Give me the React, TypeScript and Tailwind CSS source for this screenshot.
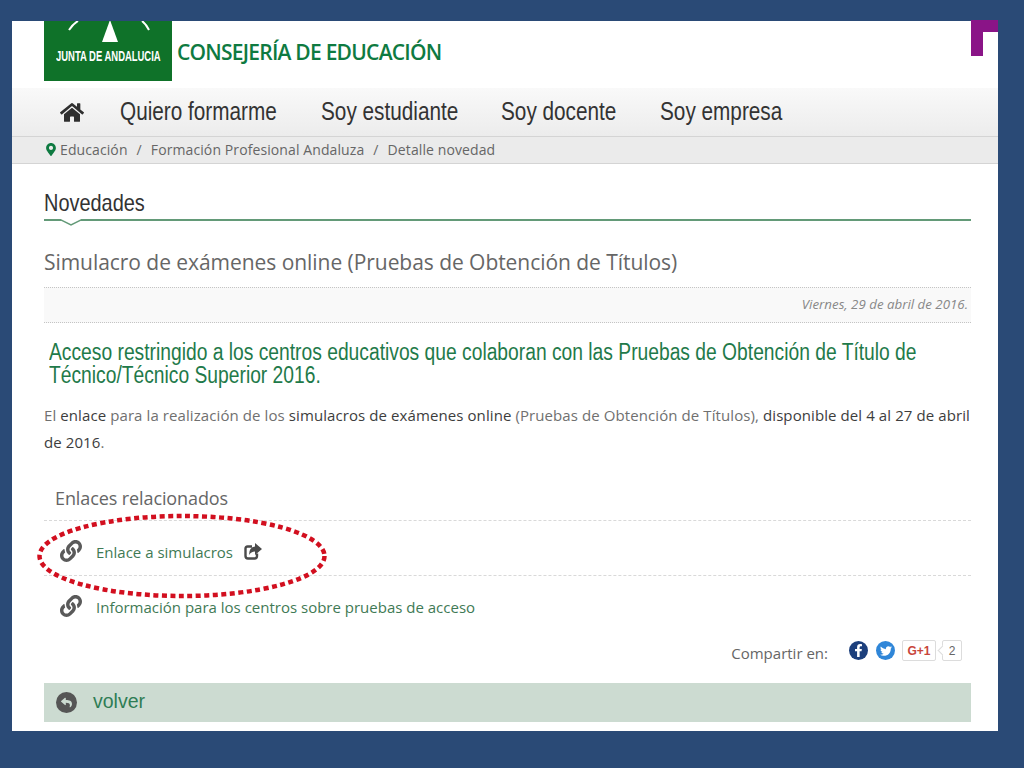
import React from "react";
import { FaHome, FaMapMarkerAlt, FaLink, FaReply, FaFacebookF, FaTwitter } from "react-icons/fa";

const open = "font-['Open_Sans',sans-serif]";
const arial = "font-['Liberation_Sans',Arial,sans-serif]";

function Narrow({ children, width, scale, className = "" }: { children: React.ReactNode; width: number; scale: number; className?: string }) {
  return (
    <span className={`block shrink-0 ${className}`} style={{ width }}>
      <span className="inline-block origin-left whitespace-nowrap" style={{ transform: `scaleX(${scale})` }}>
        {children}
      </span>
    </span>
  );
}

function ShareIcon() {
  return (
    <svg className="mb-[1px] ml-[11px]" width="18" height="17" viewBox="0 0 18 17">
      <path d="M8 3.5 H3.5 Q1.5 3.5 1.5 5.5 V13 Q1.5 15.5 4 15.5 H10.5 Q13 15.5 13 13 V10.5" fill="none" stroke="#4a4a4a" strokeWidth="2.4" />
      <path d="M11 0 L18 6 L11 12 V8.5 Q7 8.5 5 12 Q5 4 11 3.5 Z" fill="#4a4a4a" />
    </svg>
  );
}

function LinkRow({ text, ext, border }: { text: string; ext?: boolean; border?: boolean }) {
  return (
    <div className={`flex h-[55px] items-center pl-[16px] pt-[8px] ${border ? "border-t border-dashed border-[#d9d9d9]" : ""}`}>
      <FaLink className="mb-[2px] h-[22px] w-[22px] text-[#5a5a5a]" />
      <span className="ml-[14px] text-[15px] text-[#3f7a55]">{text}</span>
      {ext && <ShareIcon />}
    </div>
  );
}

export default function App() {
  return (
    <div className={`h-[768px] w-[1024px] overflow-hidden bg-[#2a4a76] pl-[12px] pt-[21px] ${open}`}>
      <div className="relative h-[710px] w-[986px] bg-white">
        {/* purple corner */}
        <div className="absolute left-[959px] top-[-1px] h-[12px] w-[27px] bg-[#8a1487]" />
        <div className="absolute left-[959px] top-[-1px] h-[36px] w-[12px] bg-[#8a1487]" />

        {/* header */}
        <header className="flex h-[67px] items-start pl-[32px]">
          <div className="relative flex h-[60px] w-[128px] items-end justify-center overflow-hidden bg-[#0f7229] pb-[18px]">
            <svg className="absolute left-0 top-0" width="128" height="30" viewBox="0 0 128 30">
              <polygon points="66,-1 74,21 58,21" fill="#fff" />
              <path d="M25 9 Q29 3 34 0" stroke="#fff" strokeWidth="2" fill="none" />
              <path d="M98 0 Q102 3 105 9" stroke="#fff" strokeWidth="2" fill="none" />
            </svg>
            <Narrow width={104} scale={0.63} className={`${arial} text-[15px] font-bold leading-none text-white`}>JUNTA DE ANDALUCIA</Narrow>
          </div>
          <div className="ml-[5px] mt-[18px] text-[21px] font-semibold leading-[26px] tracking-[-0.76px] text-[#0e7a41]">CONSEJERÍA DE EDUCACIÓN</div>
        </header>

        {/* nav */}
        <nav className={`flex h-[48px] items-center bg-gradient-to-b from-[#f9f9f9] to-[#ececec] pl-[48px] ${arial} text-[25px] text-[#333]`}>
          <FaHome className="h-[23px] w-[24px] text-[#2f2f2f]" />
          <Narrow width={157} scale={0.83} className="ml-[36px]">Quiero formarme</Narrow>
          <Narrow width={138} scale={0.83} className="ml-[44px]">Soy estudiante</Narrow>
          <Narrow width={116} scale={0.83} className="ml-[42px]">Soy docente</Narrow>
          <Narrow width={123} scale={0.83} className="ml-[43px]">Soy empresa</Narrow>
        </nav>

        {/* breadcrumb */}
        <div className="flex h-[28px] items-center border-y border-[#d4d4d4] bg-[#ebebeb] pb-[2px] pl-[34px] text-[14px] tracking-[0.1px] text-[#666]">
          <FaMapMarkerAlt className="h-[13px] w-[10px] text-[#0e7a41]" />
          <span className="ml-[4px]">Educación</span>
          <span className="mx-[9px]">/</span>
          <span>Formación Profesional Andaluza</span>
          <span className="mx-[9px]">/</span>
          <span>Detalle novedad</span>
        </div>

        <main className="pl-[32px] pr-[27px]">
          {/* Novedades */}
          <div className={`relative mt-[25px] h-[32px] border-b-2 border-[#639a78] ${arial} text-[24px] leading-[27px] text-[#333]`}>
            <Narrow width={101} scale={0.83}>Novedades</Narrow>
            <svg className="absolute left-[15px] top-[30px]" width="24" height="8" viewBox="0 0 24 8">
              <path d="M0 0 L12 6 L24 0" stroke="#639a78" strokeWidth="1.5" fill="#fff" />
            </svg>
          </div>

          <h1 className="mt-[23px] text-[21px] leading-[36px] tracking-[-0.05px] text-[#666]">Simulacro de exámenes online (Pruebas de Obtención de Títulos)</h1>

          <div className="mt-[7px] flex h-[36px] items-center justify-end border-y border-dotted border-[#c4c4c4] bg-[#f9f9f9] pr-[3px] text-[13.3px] italic text-[#888]">
            Viernes, 29 de abril de 2016.
          </div>

          <div className={`ml-[5px] mt-[18px] ${arial} text-[23px] leading-[23px] text-[#1f7a4a]`}>
            <Narrow width={867} scale={0.837}>Acceso restringido a los centros educativos que colaboran con las Pruebas de Obtención de Título de</Narrow>
            <Narrow width={867} scale={0.837}>Técnico/Técnico Superior 2016.</Narrow>
          </div>

          <p className="mt-[15px] text-[15px] leading-[27px] tracking-[0.09px] text-[#707070]">
            El <b className="font-medium text-[#3d3d3d]">enlace</b> para la realización de los <b className="font-medium text-[#3d3d3d]">simulacros de exámenes online</b> (Pruebas de Obtención de Títulos), <b className="font-medium text-[#3d3d3d]">disponible del 4 al 27 de abril de 2016</b>.
          </p>

          <h2 className="mb-[5px] mt-[25px] pl-[11px] text-[18px] leading-[34px] tracking-[-0.1px] text-[#666]">Enlaces relacionados</h2>
          <LinkRow text="Enlace a simulacros" ext border />
          <LinkRow text="Información para los centros sobre pruebas de acceso" border />

          <div className="mt-[10px] flex h-[34px] items-start justify-end pr-[9px]">
            <span className="mt-[2px] text-[15px] text-[#666]">Compartir en:</span>
            <span className="ml-[21px] mt-[1px] flex h-[19px] w-[19px] items-center justify-center rounded-full bg-[#1c3f7c]">
              <FaFacebookF className="h-[13px] w-[13px] text-white" />
            </span>
            <span className="ml-[8px] mt-[1px] flex h-[19px] w-[19px] items-center justify-center rounded-full bg-[#2f86d8]">
              <FaTwitter className="h-[12px] w-[12px] text-white" />
            </span>
            <span className={`ml-[7px] flex h-[21px] w-[34px] items-center justify-center rounded-[2px] border border-[#dcdcdc] ${arial} text-[12px] font-bold text-[#c8453b]`}>G+1</span>
            <span className={`relative ml-[6px] flex h-[21px] w-[20px] items-center justify-center rounded-[2px] border border-[#dcdcdc] ${arial} text-[12px] text-[#666]`}>
              <span className="absolute left-[-4px] top-[6px] h-[7px] w-[7px] rotate-45 border-b border-l border-[#dcdcdc] bg-white" />
              2
            </span>
          </div>

          <div className={`mt-[9px] flex h-[39px] items-center bg-[#ccdbd1] pl-[12px] ${arial} text-[19.5px] text-[#2f7d55]`}>
            <span className="flex h-[21px] w-[21px] items-center justify-center rounded-full bg-[#555]">
              <FaReply className="h-[11px] w-[11px] text-[#ccdbd1]" />
            </span>
            <span className="mb-[1px] ml-[16px]">volver</span>
          </div>
        </main>

        {/* red annotation */}
        <svg className="pointer-events-none absolute left-[22px] top-[489px]" width="296" height="92" viewBox="0 0 296 92">
          <ellipse cx="148" cy="46" rx="142.5" ry="40" fill="none" stroke="#d20f1f" strokeWidth="4.5" strokeDasharray="5 3.5" />
        </svg>
      </div>
    </div>
  );
}
